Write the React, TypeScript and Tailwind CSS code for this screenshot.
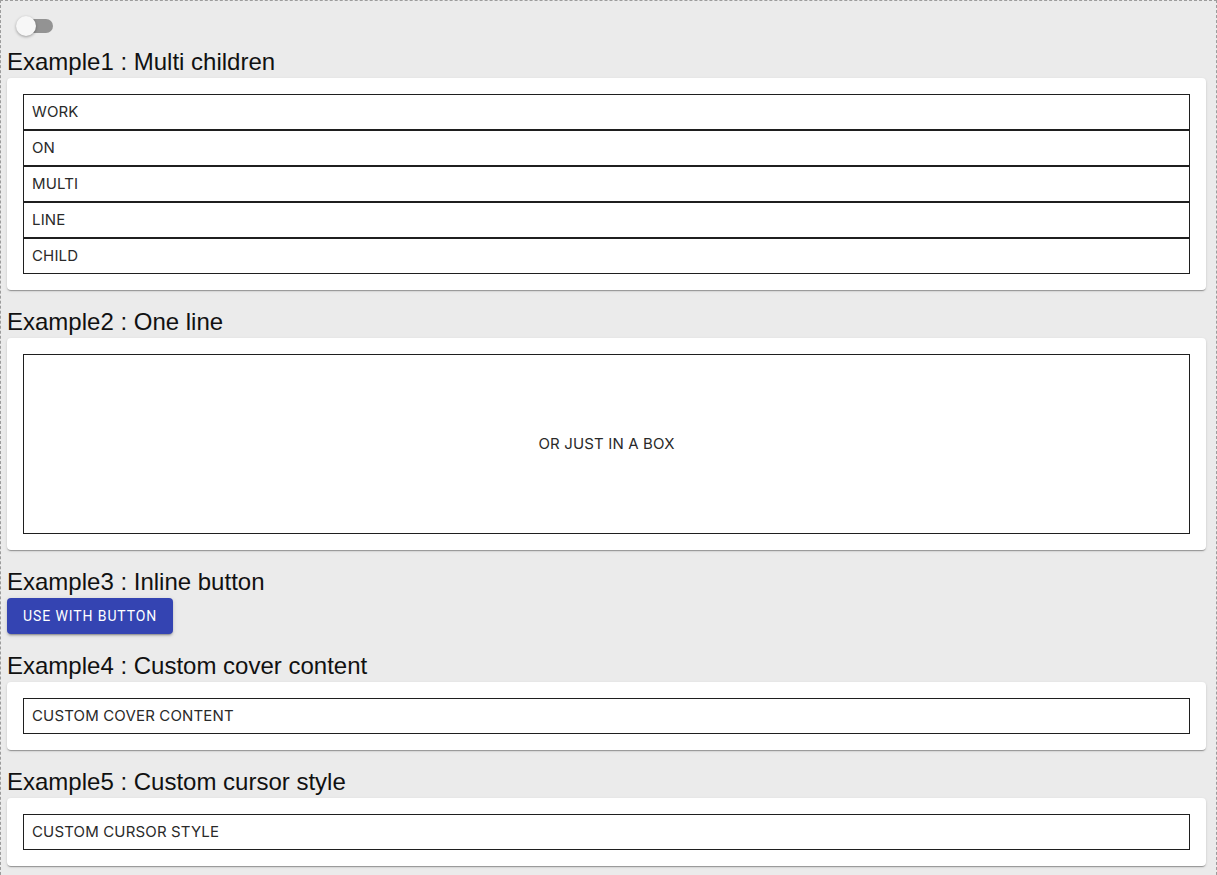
import React from "react";

const rowFont = { fontFamily: "Inter, Roboto, 'Noto Sans', sans-serif" };

function Heading({ children }: { children: React.ReactNode }) {
  return (
    <div className="h-[30px] text-[24px] leading-[28px] text-[#111] font-['Liberation_Sans',Arial,sans-serif]">
      {children}
    </div>
  );
}

function Card({ children }: { children: React.ReactNode }) {
  return (
    <div className="bg-white rounded-[4px] p-[16px] mb-[18px] shadow-[0_2px_1px_-1px_rgba(0,0,0,0.2),0_1px_1px_0_rgba(0,0,0,0.14),0_1px_3px_0_rgba(0,0,0,0.12)]">
      {children}
    </div>
  );
}

function Row({ children }: { children: React.ReactNode }) {
  return (
    <div
      className="h-[36px] border border-[#1f1f1f] flex items-center pl-[8px] text-[15px] tracking-[0.15px] text-[#2a2a2a]"
      style={rowFont}
    >
      {children}
    </div>
  );
}

export default function App() {
  return (
    <div className="min-h-[875px] box-border border border-dashed border-[#9c9c9c] bg-[#ebebeb] pl-[6px] pr-[10px]">
      <div className="h-[47px] pt-[15px] pl-[9px]">
        <div className="relative w-[37px] h-[20px]">
          <div className="absolute left-[4px] top-[3px] w-[33px] h-[14px] rounded-full bg-[#939393]" />
          <div className="absolute left-0 top-0 w-[20px] h-[20px] rounded-full bg-[#f7f7f7] shadow-[0_1px_3px_rgba(0,0,0,0.35)]" />
        </div>
      </div>

      <Heading>Example1 : Multi children</Heading>
      <Card>
        <Row>WORK</Row>
        <Row>ON</Row>
        <Row>MULTI</Row>
        <Row>LINE</Row>
        <Row>CHILD</Row>
      </Card>

      <Heading>Example2 : One line</Heading>
      <Card>
        <div
          className="h-[180px] border border-[#1f1f1f] flex items-center justify-center text-[15px] tracking-[0.15px] text-[#2a2a2a]"
          style={rowFont}
        >
          OR JUST IN A BOX
        </div>
      </Card>

      <Heading>Example3 : Inline button</Heading>
      <div className="mb-[18px]">
        <button className="h-[36px] px-[16px] rounded-[4px] bg-[#3444b2] text-white text-[14px] font-normal tracking-[0.9px] uppercase font-['Roboto',sans-serif] shadow-[0_3px_1px_-2px_rgba(0,0,0,0.2),0_2px_2px_0_rgba(0,0,0,0.14),0_1px_5px_0_rgba(0,0,0,0.12)]">
          USE WITH BUTTON
        </button>
      </div>

      <Heading>Example4 : Custom cover content</Heading>
      <Card>
        <Row>CUSTOM COVER CONTENT</Row>
      </Card>

      <Heading>Example5 : Custom cursor style</Heading>
      <Card>
        <Row>CUSTOM CURSOR STYLE</Row>
      </Card>
    </div>
  );
}
